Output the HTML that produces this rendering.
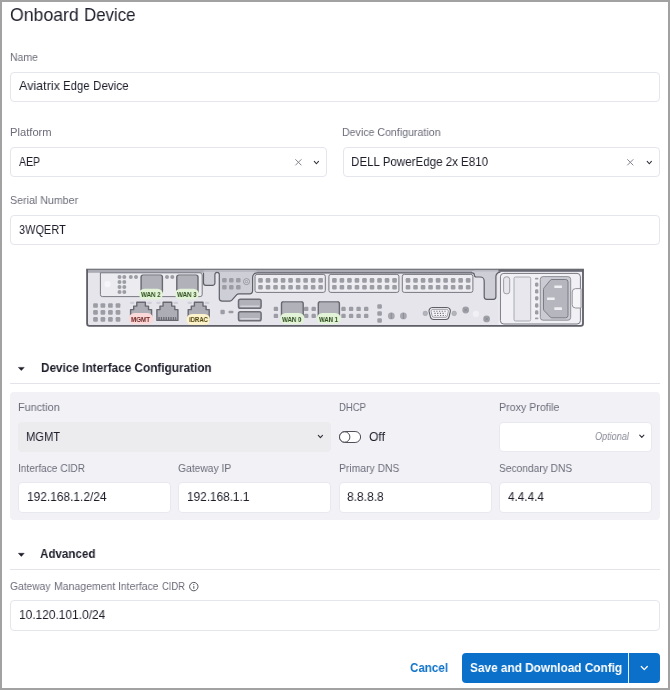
<!DOCTYPE html>
<html lang="en">
<head>
<meta charset="utf-8">
<title>Onboard Device</title>
<style>
*{box-sizing:border-box;margin:0;padding:0}
html,body{width:670px;height:690px;overflow:hidden;background:#fff}
body{font-family:"Liberation Sans",sans-serif;color:#1e1e2b;position:relative}
.frame{position:absolute;left:0;top:0;width:670px;height:690px;border:2px solid #a2a2a2}
.t{position:absolute;white-space:nowrap;transform-origin:0 0;line-height:1;will-change:transform}
.title{font-size:18.6px;color:#1e1e2b}
.lbl{font-size:11.2px;color:#6c6c7a}
.val{font-size:13.0px;color:#1e1e2b}
.hd{font-size:13.0px;font-weight:bold;color:#1e1e2b}
.opt{font-size:10.7px;font-style:italic;color:#8b8b9a}
.pg,.pr,.py{font-size:7.8px;font-weight:bold}
.pg{color:#2e4d1d}.pr{color:#6d2623}.py{color:#50450f}
.box{position:absolute;background:#fff;border:1px solid #e5e5ed;border-radius:4px}
.hr{position:absolute;height:1px;background:#e3e3e9}
.panel{position:absolute;left:10px;top:392px;width:650px;height:128px;background:#f1f1f6;border-radius:4px}
svg{position:absolute;overflow:visible}
</style>
</head>
<body>
<div class="box" style="left:10px;top:72px;width:650px;height:30px;"></div>
<div class="box" style="left:10px;top:147px;width:317px;height:30px;"></div>
<div class="box" style="left:343px;top:147px;width:317px;height:30px;"></div>
<div class="box" style="left:10px;top:215px;width:650px;height:30px;"></div>
<svg style="left:0;top:0" width="670" height="690"><path d="M295.4 159.3L301.4 165.3M301.4 159.3L295.4 165.3" fill="none" stroke="#83838f" stroke-width="1"/></svg>
<svg style="left:0;top:0" width="670" height="690"><path d="M314.3 161.45L316.4 163.75L318.5 161.45" fill="none" stroke="#30303a" stroke-width="1.1" stroke-linecap="round" stroke-linejoin="round"/></svg>
<svg style="left:0;top:0" width="670" height="690"><path d="M627.3 159.3L633.3 165.3M633.3 159.3L627.3 165.3" fill="none" stroke="#83838f" stroke-width="1"/></svg>
<svg style="left:0;top:0" width="670" height="690"><path d="M647.2 161.45L649.3 163.75L651.4 161.45" fill="none" stroke="#30303a" stroke-width="1.1" stroke-linecap="round" stroke-linejoin="round"/></svg>
<svg style="left:0;top:0" width="670" height="690" viewBox="0 0 670 690">
<path d="M86.2 268.7H583.9V323.6a3 3 0 0 1-3 3H89.2a3 3 0 0 1-3-3z" fill="#e6e5ec"/>
<rect x="87" y="269.4" width="496" height="3.4" fill="#ababb4"/>
<path d="M203.5 271.5V283a2.4 2.4 0 0 0 2.4 2.4h6.6a2.4 2.4 0 0 0 2.4-2.4V274.6a2.2 2.2 0 0 1 4.4 0V298.3a2.8 2.8 0 0 0 2.8 2.8h7.8a2.8 2.8 0 0 0 2-.9l4.9-5.5a2.8 2.8 0 0 1 2-.9h11a2.8 2.8 0 0 0 2.8-2.8V277.4a4.6 4.6 0 0 1 4.6-4.6V271.5z" fill="#ceced7"/>
<rect x="203.8" y="269.4" width="52" height="2.4" fill="#bbbbc4"/>
<path d="M203.5 272.8V283a2.4 2.4 0 0 0 2.4 2.4h6.6a2.4 2.4 0 0 0 2.4-2.4V274.6a2.2 2.2 0 0 1 4.4 0V298.3a2.8 2.8 0 0 0 2.8 2.8h7.8a2.8 2.8 0 0 0 2-.9l4.9-5.5a2.8 2.8 0 0 1 2-.9h11a2.8 2.8 0 0 0 2.8-2.8V277.4a4.6 4.6 0 0 1 4.6-4.6H472" fill="none" stroke="#5f5f68" stroke-width="1.2" stroke-linejoin="round"/>
<path d="M472 272.8a2.4 2.4 0 0 1 2.4 2.4a1.8 1.8 0 0 0 1.8 1.8h4a4 4 0 0 1 4 4V296.8a2.5 2.5 0 0 0 2.5 2.5h6.7a2.5 2.5 0 0 0 2.5-2.5V276.6a4.4 4.4 0 0 1 4.4-4.4V271H472z" fill="#ceced7"/>
<rect x="474" y="269.4" width="24.5" height="2.2" fill="#bbbbc4"/>
<path d="M472 272.8a2.4 2.4 0 0 1 2.4 2.4a1.8 1.8 0 0 0 1.8 1.8h4a4 4 0 0 1 4 4V296.8a2.5 2.5 0 0 0 2.5 2.5h6.7a2.5 2.5 0 0 0 2.5-2.5V276.6a4.4 4.4 0 0 1 4.4-4.4" fill="none" stroke="#5f5f68" stroke-width="1.2" stroke-linejoin="round" stroke-linecap="round"/>
<path d="M100.4 272.8V294.6a2 2 0 0 0 2 2H200.2a2 2 0 0 0 2-2V275a2.2 2.2 0 0 0-2.2-2.2z" fill="#ebebf0" stroke="#66666f" stroke-width="0.85"/>
<circle cx="107.5" cy="284.2" r="3.1" fill="#f6f6f9"/>
<rect x="117.5" y="275.1" width="4" height="4" rx="2" fill="#9c9ca5"/>
<rect x="122.3" y="275.1" width="4" height="4" rx="2" fill="#9c9ca5"/>
<rect x="117.5" y="280" width="4" height="4" rx="2" fill="#9c9ca5"/>
<rect x="122.3" y="280" width="4" height="4" rx="2" fill="#9c9ca5"/>
<rect x="117.5" y="285" width="4" height="4" rx="2" fill="#9c9ca5"/>
<rect x="122.3" y="285" width="4" height="4" rx="2" fill="#9c9ca5"/>
<rect x="117.5" y="289.9" width="4" height="4" rx="2" fill="#9c9ca5"/>
<rect x="122.3" y="289.9" width="4" height="4" rx="2" fill="#9c9ca5"/>
<rect x="128.8" y="275.1" width="4" height="4" rx="2" fill="#9c9ca5"/>
<rect x="134" y="275.1" width="4" height="4" rx="2" fill="#9c9ca5"/>
<rect x="165" y="275.1" width="4" height="4" rx="2" fill="#9c9ca5"/>
<rect x="170.3" y="275.1" width="4" height="4" rx="2" fill="#9c9ca5"/>
<rect x="93.15" y="303.15" width="4.7" height="4.7" rx="1.2" fill="#9c9ca5"/>
<rect x="100.55" y="303.15" width="4.7" height="4.7" rx="1.2" fill="#9c9ca5"/>
<rect x="108.05" y="303.15" width="4.7" height="4.7" rx="1.2" fill="#9c9ca5"/>
<rect x="115.65" y="303.15" width="4.7" height="4.7" rx="1.2" fill="#9c9ca5"/>
<rect x="93.15" y="310.05" width="4.7" height="4.7" rx="1.2" fill="#9c9ca5"/>
<rect x="100.55" y="310.05" width="4.7" height="4.7" rx="1.2" fill="#9c9ca5"/>
<rect x="108.05" y="310.05" width="4.7" height="4.7" rx="1.2" fill="#9c9ca5"/>
<rect x="115.65" y="310.05" width="4.7" height="4.7" rx="1.2" fill="#9c9ca5"/>
<rect x="93.15" y="317.05" width="4.7" height="4.7" rx="1.2" fill="#9c9ca5"/>
<rect x="100.55" y="317.05" width="4.7" height="4.7" rx="1.2" fill="#9c9ca5"/>
<rect x="108.05" y="317.05" width="4.7" height="4.7" rx="1.2" fill="#9c9ca5"/>
<rect x="115.65" y="317.05" width="4.7" height="4.7" rx="1.2" fill="#9c9ca5"/>
<rect x="222.15" y="278.05" width="4.5" height="4.5" rx="1.2" fill="#9c9ca5"/>
<rect x="229.05" y="278.05" width="4.5" height="4.5" rx="1.2" fill="#9c9ca5"/>
<rect x="236.05" y="278.05" width="4.5" height="4.5" rx="1.2" fill="#9c9ca5"/>
<rect x="222.15" y="284.95" width="4.5" height="4.5" rx="1.2" fill="#9c9ca5"/>
<rect x="229.05" y="284.95" width="4.5" height="4.5" rx="1.2" fill="#9c9ca5"/>
<rect x="236.05" y="284.95" width="4.5" height="4.5" rx="1.2" fill="#9c9ca5"/>
<rect x="255" y="274.4" width="70.3" height="18" rx="2" fill="#ececf1" stroke="#777780" stroke-width="1"/>
<rect x="328.9" y="274.4" width="70" height="18" rx="2" fill="#ececf1" stroke="#777780" stroke-width="1"/>
<rect x="402.3" y="274.4" width="70.6" height="18" rx="2" fill="#ececf1" stroke="#777780" stroke-width="1"/>
<rect x="258.2" y="278.1" width="4.6" height="4.6" rx="1.2" fill="#9c9ca5"/>
<rect x="265.72" y="278.1" width="4.6" height="4.6" rx="1.2" fill="#9c9ca5"/>
<rect x="273.24" y="278.1" width="4.6" height="4.6" rx="1.2" fill="#9c9ca5"/>
<rect x="280.76" y="278.1" width="4.6" height="4.6" rx="1.2" fill="#9c9ca5"/>
<rect x="288.28" y="278.1" width="4.6" height="4.6" rx="1.2" fill="#9c9ca5"/>
<rect x="295.8" y="278.1" width="4.6" height="4.6" rx="1.2" fill="#9c9ca5"/>
<rect x="303.32" y="278.1" width="4.6" height="4.6" rx="1.2" fill="#9c9ca5"/>
<rect x="310.84" y="278.1" width="4.6" height="4.6" rx="1.2" fill="#9c9ca5"/>
<rect x="318.36" y="278.1" width="4.6" height="4.6" rx="1.2" fill="#9c9ca5"/>
<rect x="258.2" y="284.9" width="4.6" height="4.6" rx="1.2" fill="#9c9ca5"/>
<rect x="265.72" y="284.9" width="4.6" height="4.6" rx="1.2" fill="#9c9ca5"/>
<rect x="273.24" y="284.9" width="4.6" height="4.6" rx="1.2" fill="#9c9ca5"/>
<rect x="280.76" y="284.9" width="4.6" height="4.6" rx="1.2" fill="#9c9ca5"/>
<rect x="288.28" y="284.9" width="4.6" height="4.6" rx="1.2" fill="#9c9ca5"/>
<rect x="295.8" y="284.9" width="4.6" height="4.6" rx="1.2" fill="#9c9ca5"/>
<rect x="303.32" y="284.9" width="4.6" height="4.6" rx="1.2" fill="#9c9ca5"/>
<rect x="310.84" y="284.9" width="4.6" height="4.6" rx="1.2" fill="#9c9ca5"/>
<rect x="318.36" y="284.9" width="4.6" height="4.6" rx="1.2" fill="#9c9ca5"/>
<rect x="332.1" y="278.1" width="4.6" height="4.6" rx="1.2" fill="#9c9ca5"/>
<rect x="339.62" y="278.1" width="4.6" height="4.6" rx="1.2" fill="#9c9ca5"/>
<rect x="347.14" y="278.1" width="4.6" height="4.6" rx="1.2" fill="#9c9ca5"/>
<rect x="354.66" y="278.1" width="4.6" height="4.6" rx="1.2" fill="#9c9ca5"/>
<rect x="362.18" y="278.1" width="4.6" height="4.6" rx="1.2" fill="#9c9ca5"/>
<rect x="369.7" y="278.1" width="4.6" height="4.6" rx="1.2" fill="#9c9ca5"/>
<rect x="377.22" y="278.1" width="4.6" height="4.6" rx="1.2" fill="#9c9ca5"/>
<rect x="384.74" y="278.1" width="4.6" height="4.6" rx="1.2" fill="#9c9ca5"/>
<rect x="392.26" y="278.1" width="4.6" height="4.6" rx="1.2" fill="#9c9ca5"/>
<rect x="332.1" y="284.9" width="4.6" height="4.6" rx="1.2" fill="#9c9ca5"/>
<rect x="339.62" y="284.9" width="4.6" height="4.6" rx="1.2" fill="#9c9ca5"/>
<rect x="347.14" y="284.9" width="4.6" height="4.6" rx="1.2" fill="#9c9ca5"/>
<rect x="354.66" y="284.9" width="4.6" height="4.6" rx="1.2" fill="#9c9ca5"/>
<rect x="362.18" y="284.9" width="4.6" height="4.6" rx="1.2" fill="#9c9ca5"/>
<rect x="369.7" y="284.9" width="4.6" height="4.6" rx="1.2" fill="#9c9ca5"/>
<rect x="377.22" y="284.9" width="4.6" height="4.6" rx="1.2" fill="#9c9ca5"/>
<rect x="384.74" y="284.9" width="4.6" height="4.6" rx="1.2" fill="#9c9ca5"/>
<rect x="392.26" y="284.9" width="4.6" height="4.6" rx="1.2" fill="#9c9ca5"/>
<rect x="405.7" y="278.1" width="4.6" height="4.6" rx="1.2" fill="#9c9ca5"/>
<rect x="413.22" y="278.1" width="4.6" height="4.6" rx="1.2" fill="#9c9ca5"/>
<rect x="420.74" y="278.1" width="4.6" height="4.6" rx="1.2" fill="#9c9ca5"/>
<rect x="428.26" y="278.1" width="4.6" height="4.6" rx="1.2" fill="#9c9ca5"/>
<rect x="435.78" y="278.1" width="4.6" height="4.6" rx="1.2" fill="#9c9ca5"/>
<rect x="443.3" y="278.1" width="4.6" height="4.6" rx="1.2" fill="#9c9ca5"/>
<rect x="450.82" y="278.1" width="4.6" height="4.6" rx="1.2" fill="#9c9ca5"/>
<rect x="458.34" y="278.1" width="4.6" height="4.6" rx="1.2" fill="#9c9ca5"/>
<rect x="465.86" y="278.1" width="4.6" height="4.6" rx="1.2" fill="#9c9ca5"/>
<rect x="405.7" y="284.9" width="4.6" height="4.6" rx="1.2" fill="#9c9ca5"/>
<rect x="413.22" y="284.9" width="4.6" height="4.6" rx="1.2" fill="#9c9ca5"/>
<rect x="420.74" y="284.9" width="4.6" height="4.6" rx="1.2" fill="#9c9ca5"/>
<rect x="428.26" y="284.9" width="4.6" height="4.6" rx="1.2" fill="#9c9ca5"/>
<rect x="435.78" y="284.9" width="4.6" height="4.6" rx="1.2" fill="#9c9ca5"/>
<rect x="443.3" y="284.9" width="4.6" height="4.6" rx="1.2" fill="#9c9ca5"/>
<rect x="450.82" y="284.9" width="4.6" height="4.6" rx="1.2" fill="#9c9ca5"/>
<rect x="458.34" y="284.9" width="4.6" height="4.6" rx="1.2" fill="#9c9ca5"/>
<rect x="465.86" y="284.9" width="4.6" height="4.6" rx="1.2" fill="#9c9ca5"/>
<rect x="273.7" y="306.7" width="4.4" height="4.4" rx="1.2" fill="#9c9ca5"/>
<rect x="273.7" y="313.7" width="4.4" height="4.4" rx="1.2" fill="#9c9ca5"/>
<rect x="304" y="306.7" width="4.4" height="4.4" rx="1.2" fill="#9c9ca5"/>
<rect x="311.5" y="306.7" width="4.4" height="4.4" rx="1.2" fill="#9c9ca5"/>
<rect x="304" y="313.7" width="4.4" height="4.4" rx="1.2" fill="#9c9ca5"/>
<rect x="311.5" y="313.7" width="4.4" height="4.4" rx="1.2" fill="#9c9ca5"/>
<rect x="341.3" y="306.7" width="4.4" height="4.4" rx="1.2" fill="#9c9ca5"/>
<rect x="348.9" y="306.7" width="4.4" height="4.4" rx="1.2" fill="#9c9ca5"/>
<rect x="356.4" y="306.7" width="4.4" height="4.4" rx="1.2" fill="#9c9ca5"/>
<rect x="364" y="306.7" width="4.4" height="4.4" rx="1.2" fill="#9c9ca5"/>
<rect x="341.3" y="313.7" width="4.4" height="4.4" rx="1.2" fill="#9c9ca5"/>
<rect x="348.9" y="313.7" width="4.4" height="4.4" rx="1.2" fill="#9c9ca5"/>
<rect x="356.4" y="313.7" width="4.4" height="4.4" rx="1.2" fill="#9c9ca5"/>
<rect x="364" y="313.7" width="4.4" height="4.4" rx="1.2" fill="#9c9ca5"/>
<rect x="377.3" y="304.2" width="4.6" height="4.6" rx="1.2" fill="#9c9ca5"/>
<rect x="377.3" y="311.2" width="4.6" height="4.6" rx="1.2" fill="#9c9ca5"/>
<rect x="377.3" y="318.2" width="4.6" height="4.6" rx="1.2" fill="#9c9ca5"/>
<rect x="220.4" y="309.8" width="4.4" height="4.4" rx="1.2" fill="#9c9ca5"/>
<rect x="228.5" y="310.8" width="5" height="2.4" rx="1" fill="#9c9ca5"/>
<circle cx="246.5" cy="281.6" r="3" fill="#d8d8df" stroke="#8e8e97" stroke-width="0.9"/><circle cx="246.5" cy="281.6" r="1.2" fill="none" stroke="#8e8e97" stroke-width="0.8"/>
<circle cx="391.3" cy="315.9" r="3.4" fill="#a7a7b0"/><path d="M391.3 312.8v6.2" stroke="#8a8a93" stroke-width="0.9"/>
<circle cx="403.4" cy="315.9" r="3.4" fill="#a7a7b0"/><path d="M403.4 312.8v6.2" stroke="#8a8a93" stroke-width="0.9"/>
<circle cx="465.7" cy="310" r="3.4" fill="#a0a0a9"/>
<path d="M464.2 308.5l3 3M467.2 308.5l-3 3" stroke="#85858e" stroke-width="0.8" fill="none"/>
<circle cx="486.6" cy="318.9" r="3.4" fill="#a0a0a9"/>
<path d="M485.1 317.4l3 3M488.1 317.4l-3 3" stroke="#85858e" stroke-width="0.8" fill="none"/>
<circle cx="475.9" cy="313.9" r="3.1" fill="#f1f1f5"/>
<rect x="141.1" y="275.1" width="21.3" height="18.2" rx="2" fill="#b1b1ba" stroke="#686871" stroke-width="1.4"/>
<path d="M142.8 275.3H160.7" stroke="#9d9da6" stroke-width="1.2"/>
<rect x="176.8" y="275.1" width="21.2" height="18.2" rx="2" fill="#b1b1ba" stroke="#686871" stroke-width="1.4"/>
<path d="M178.5 275.3H196.3" stroke="#9d9da6" stroke-width="1.2"/>
<rect x="281.5" y="301.8" width="21.7" height="16.5" rx="2" fill="#b1b1ba" stroke="#686871" stroke-width="1.4"/>
<path d="M283.2 302H301.5" stroke="#9d9da6" stroke-width="1.2"/>
<rect x="318.3" y="301.8" width="21.1" height="16.5" rx="2" fill="#b1b1ba" stroke="#686871" stroke-width="1.4"/>
<path d="M320 302H337.7" stroke="#9d9da6" stroke-width="1.2"/>
<path d="M130.6 320.4V309.6h3.1v-3.5h3.1v-3.8h8.6v3.8h3.1v3.5h3.1V320.4z" fill="#adadb6" stroke="#686871" stroke-width="1.4" stroke-linejoin="round"/>
<rect x="129.9" y="301.7" width="4.6" height="2.2" rx="1.1" fill="#cfcfd7"/><rect x="147.1" y="301.7" width="4.8" height="2.2" rx="1.1" fill="#cfcfd7"/>
<path d="M156.9 320.4V309.6h3.1v-3.5h3.1v-3.8h8.6v3.8h3.1v3.5h3.1V320.4z" fill="#adadb6" stroke="#686871" stroke-width="1.4" stroke-linejoin="round"/>
<rect x="156.2" y="301.7" width="4.6" height="2.2" rx="1.1" fill="#cfcfd7"/><rect x="173.4" y="301.7" width="4.8" height="2.2" rx="1.1" fill="#cfcfd7"/>
<path d="M158.4 318.6H176.2" stroke="#686871" stroke-width="3" stroke-dasharray="1.3 1.1"/>
<path d="M188.2 320.4V309.6h3.1v-3.5h3.1v-3.8h8.6v3.8h3.1v3.5h3.1V320.4z" fill="#adadb6" stroke="#686871" stroke-width="1.4" stroke-linejoin="round"/>
<rect x="187.5" y="301.7" width="4.6" height="2.2" rx="1.1" fill="#cfcfd7"/><rect x="204.7" y="301.7" width="4.8" height="2.2" rx="1.1" fill="#cfcfd7"/>
<rect x="238.5" y="299.25" width="22.6" height="9" rx="1.8" fill="#b1b1ba" stroke="#6e6e77" stroke-width="1.5"/>
<path d="M240.4 306.2H259.2" stroke="#e0e0e6" stroke-width="1.1"/>
<rect x="238.5" y="311.85" width="22.6" height="9" rx="1.8" fill="#b1b1ba" stroke="#6e6e77" stroke-width="1.5"/>
<path d="M240.4 318.8H259.2" stroke="#e0e0e6" stroke-width="1.1"/>
<path d="M432.4 307.5h14.6a3.4 3.4 0 0 1 3.3 4.2l-1.3 5.2a3.4 3.4 0 0 1-3.3 2.6h-12a3.4 3.4 0 0 1-3.3-2.6l-1.3-5.2a3.4 3.4 0 0 1 3.3-4.2z" fill="#f3f3f6" stroke="#5f5f68" stroke-width="1.1"/>
<path d="M433 309.3h13.4a1.9 1.9 0 0 1 1.9 2.4l-1 4.1a1.9 1.9 0 0 1-1.9 1.5h-11.4a1.9 1.9 0 0 1-1.9-1.5l-1-4.1a1.9 1.9 0 0 1 1.9-2.4z" fill="#f3f3f6" stroke="#777780" stroke-width="0.7"/>
<path d="M433.6 311.3H446M434.4 313.4H445.4M434.6 315.5H446" stroke="#74747d" stroke-width="1.1" stroke-dasharray="1.2 1.5"/>
<circle cx="425.3" cy="313.4" r="2.3" fill="#b4b4bc" stroke="#9a9aa3" stroke-width="0.5"/>
<circle cx="454.2" cy="313.4" r="2.3" fill="#b4b4bc" stroke="#9a9aa3" stroke-width="0.5"/>
<path d="M498.6 276a4.2 4.2 0 0 1 4.2-4.2H582V325H498.6z" fill="#f0f0f5"/>
<rect x="498.5" y="269.4" width="84.5" height="2.3" fill="#696972"/>
<rect x="500.4" y="273.4" width="80" height="50.6" rx="3.4" fill="#f1f1f5" stroke="#777780" stroke-width="1"/>
<rect x="503.6" y="276.8" width="6.1" height="17" rx="2.6" fill="#e6e6ec" stroke="#8a8a93" stroke-width="0.8"/>
<rect x="514" y="277" width="16.7" height="44" rx="1.4" fill="#e7e7ed" stroke="#9a9aa3" stroke-width="0.8"/>
<rect x="535" y="282.45" width="3.4" height="4.3" rx="1.4" fill="#9c9ca5"/>
<rect x="535" y="289.25" width="3.4" height="4.3" rx="1.4" fill="#9c9ca5"/>
<rect x="535" y="296.15" width="3.4" height="4.3" rx="1.4" fill="#9c9ca5"/>
<rect x="535" y="303.35" width="3.4" height="4.3" rx="1.4" fill="#9c9ca5"/>
<rect x="535" y="310.25" width="3.4" height="4.3" rx="1.4" fill="#9c9ca5"/>
<rect x="535" y="277.75" width="3.4" height="1.7" rx="0.6" fill="#9c9ca5"/>
<rect x="535" y="317.55" width="3.4" height="1.7" rx="0.6" fill="#9c9ca5"/>
<rect x="540.3" y="276.6" width="30.4" height="43.6" rx="2.8" fill="#cbcbd3" stroke="#888891" stroke-width="0.9"/>
<path d="M552 279.5h13.6a2.4 2.4 0 0 1 2.4 2.4v33.5a2.4 2.4 0 0 1-2.4 2.4H552a2.4 2.4 0 0 1-1.7-.7l-6.1-6.4a2.4 2.4 0 0 1-.7-1.7V289.4a2.4 2.4 0 0 1 .7-1.7l6.1-7.5a2.4 2.4 0 0 1 1.7-.7z" fill="#b6b6bf" stroke="#74747d" stroke-width="0.9"/>
<rect x="554.3" y="285.4" width="7.7" height="2.6" rx="0.4" fill="#eeeef3"/>
<rect x="547" y="297.4" width="7.7" height="2.6" rx="0.4" fill="#eeeef3"/>
<rect x="554.3" y="307.3" width="7.7" height="2.6" rx="0.4" fill="#eeeef3"/>
<path d="M581 288.6h-5.4a3.4 3.4 0 0 0-3.4 3.4v12.6a3.4 3.4 0 0 0 3.4 3.4H581z" fill="#f6f6f9" stroke="#888891" stroke-width="0.9"/>
<path d="M87.1 269.2V323.5a2.4 2.4 0 0 0 2.4 2.4H580.6a2.4 2.4 0 0 0 2.4-2.4V269.2" fill="none" stroke="#5f5f68" stroke-width="1.8"/>
<path d="M86.2 269.2H583.9" fill="none" stroke="#5f5f68" stroke-width="1.1"/>
<rect x="138.9" y="288.8" width="24" height="10.7" rx="5.35" fill="#e2f3d7"/>
<rect x="175" y="288.8" width="23.9" height="10.7" rx="5.35" fill="#e2f3d7"/>
<rect x="280.1" y="313" width="24.4" height="11" rx="5.5" fill="#e2f3d7"/>
<rect x="316.9" y="313" width="23.9" height="11" rx="5.5" fill="#e2f3d7"/>
<rect x="128.8" y="313" width="24.4" height="11.3" rx="5.65" fill="#fbd9d9"/>
<rect x="186.5" y="314" width="23.5" height="11" rx="5.5" fill="#fcf2cb"/>
</svg>
<svg style="left:0;top:0" width="670" height="690"><path d="M18.4 367.4h5.8l-2.9 3.1z" fill="#1e1e2b" stroke="#1e1e2b" stroke-width="0.5" stroke-linejoin="round"/></svg>
<div class="hr" style="left:10px;top:383px;width:650px"></div>
<div class="panel"></div>
<div class="box" style="left:18px;top:422px;width:313px;height:30px;background:#ececef;border-color:#ececef"></div>
<svg style="left:0;top:0" width="670" height="690"><path d="M318.3 435.35L320.4 437.65L322.5 435.35" fill="none" stroke="#30303a" stroke-width="1.1" stroke-linecap="round" stroke-linejoin="round"/></svg>
<svg style="left:0;top:0" width="670" height="690"><rect x="339.5" y="431.5" width="21.1" height="11" rx="5.5" fill="#fff" stroke="#505059" stroke-width="1"/><circle cx="344.7" cy="437" r="5.2" fill="#fff" stroke="#505059" stroke-width="1"/></svg>
<div class="box" style="left:499px;top:422px;width:153px;height:30px;border-color:#e8e8f0"></div>
<svg style="left:0;top:0" width="670" height="690"><path d="M639.7 435.15L641.8 437.45L643.9 435.15" fill="none" stroke="#30303a" stroke-width="1.1" stroke-linecap="round" stroke-linejoin="round"/></svg>
<div class="box" style="left:18px;top:482px;width:153px;height:31px;border-color:#e8e8f0"></div>
<div class="box" style="left:178px;top:482px;width:153px;height:31px;border-color:#e8e8f0"></div>
<div class="box" style="left:339px;top:482px;width:153px;height:31px;border-color:#e8e8f0"></div>
<div class="box" style="left:499px;top:482px;width:153px;height:31px;border-color:#e8e8f0"></div>
<svg style="left:0;top:0" width="670" height="690"><path d="M18.4 553.3h5.8l-2.9 3.1z" fill="#1e1e2b" stroke="#1e1e2b" stroke-width="0.5" stroke-linejoin="round"/></svg>
<div class="hr" style="left:10px;top:569px;width:650px"></div>
<svg style="left:0;top:0" width="670" height="690"><circle cx="193.8" cy="586.6" r="4.2" fill="none" stroke="#4d4d5a" stroke-width="0.95"/><path d="M193.8 586.1v2.7" stroke="#4d4d5a" stroke-width="0.95" fill="none"/><circle cx="193.8" cy="584.6" r="0.6" fill="#4d4d5a"/></svg>
<div class="box" style="left:10px;top:600px;width:650px;height:31px;"></div>
<div style="position:absolute;left:462px;top:653px;width:198px;height:29.5px;background:#0b70c9;border-radius:4px"></div>
<div style="position:absolute;left:628px;top:653px;width:1px;height:29.5px;background:#e8f2fb"></div>
<svg style="left:0;top:0" width="670" height="690"><path d="M641.3 666.55L644.3 669.65L647.3 666.55" fill="none" stroke="#fff" stroke-width="1.3" stroke-linecap="round" stroke-linejoin="round"/></svg>
<div class="t title" style="left:10.437px;top:6px;transform:scaleX(0.95)">Onboard</div>
<div class="t title" style="left:84.393px;top:6px;transform:scaleX(0.905)">Device</div>
<div class="t lbl" style="left:10.061px;top:52px;transform:scaleX(0.939)">Name</div>
<div class="t val" style="left:19.15px;top:79px;transform:scaleX(0.963)">Aviatrix</div>
<div class="t val" style="left:63.377px;top:79px;transform:scaleX(0.873)">Edge</div>
<div class="t val" style="left:93.053px;top:79px;transform:scaleX(0.897)">Device</div>
<div class="t lbl" style="left:10.006px;top:127px;transform:scaleX(0.994)">Platform</div>
<div class="t val" style="left:19.35px;top:155px;transform:scaleX(0.812)">AEP</div>
<div class="t lbl" style="left:342.202px;top:127px;transform:scaleX(0.948)">Device Configuration</div>
<div class="t val" style="left:350.861px;top:155px;transform:scaleX(0.889)">DELL PowerEdge 2x E810</div>
<div class="t lbl" style="left:9.974px;top:195px;transform:scaleX(0.953)">Serial Number</div>
<div class="t val" style="left:18.928px;top:223px;transform:scaleX(0.844)">3WQERT</div>
<div class="t hd" style="left:41.071px;top:361px;transform:scaleX(0.905)">Device Interface Configuration</div>
<div class="t lbl" style="left:17.978px;top:402px;transform:scaleX(0.972)">Function</div>
<div class="t val" style="left:26.19px;top:430px;transform:scaleX(0.86)">MGMT</div>
<div class="t lbl" style="left:338.9px;top:402px;transform:scaleX(0.85)">DHCP</div>
<div class="t val" style="left:368.881px;top:430px;transform:scaleX(0.937)">Off</div>
<div class="t lbl" style="left:498.798px;top:402px;transform:scaleX(0.952)">Proxy Profile</div>
<div class="t opt" style="left:594.925px;top:431px;transform:scaleX(0.851)">Optional</div>
<div class="t lbl" style="left:18.045px;top:463px;transform:scaleX(0.905)">Interface CIDR</div>
<div class="t val" style="left:26.733px;top:490px;transform:scaleX(0.917)">192.168.1.2/24</div>
<div class="t lbl" style="left:177.989px;top:463px;transform:scaleX(0.922)">Gateway IP</div>
<div class="t val" style="left:187.241px;top:490px;transform:scaleX(0.909)">192.168.1.1</div>
<div class="t lbl" style="left:338.825px;top:463px;transform:scaleX(0.925)">Primary DNS</div>
<div class="t val" style="left:347.188px;top:490px;transform:scaleX(0.924)">8.8.8.8</div>
<div class="t lbl" style="left:498.994px;top:463px;transform:scaleX(0.912)">Secondary DNS</div>
<div class="t val" style="left:507.924px;top:490px;transform:scaleX(0.904)">4.4.4.4</div>
<div class="t hd" style="left:40.427px;top:547px;transform:scaleX(0.892)">Advanced</div>
<div class="t lbl" style="left:10.391px;top:581px;transform:scaleX(0.917)">Gateway</div>
<div class="t lbl" style="left:53.911px;top:581px;transform:scaleX(0.939)">Management</div>
<div class="t lbl" style="left:117.919px;top:581px;transform:scaleX(0.931)">Interface</div>
<div class="t lbl" style="left:162.131px;top:581px;transform:scaleX(0.838)">CIDR</div>
<div class="t val" style="left:19.032px;top:608px;transform:scaleX(0.918)">10.120.101.0/24</div>
<div class="t pg" style="left:141.15px;top:291px;transform:scaleX(0.8)">WAN 2</div>
<div class="t pg" style="left:177.15px;top:291px;transform:scaleX(0.8)">WAN 3</div>
<div class="t pg" style="left:282.45px;top:316px;transform:scaleX(0.788)">WAN 0</div>
<div class="t pg" style="left:319.45px;top:316px;transform:scaleX(0.771)">WAN 1</div>
<div class="t pr" style="left:130.75px;top:316px;transform:scaleX(0.8)">MGMT</div>
<div class="t py" style="left:188.667px;top:316px;transform:scaleX(0.767)">iDRAC</div>
<div class="t hd" style="left:409.504px;top:661px;transform:scaleX(0.892);color:#0e72c9">Cancel</div>
<div class="t hd" style="left:469.696px;top:661px;transform:scaleX(0.908);color:#fff">Save and Download Config</div>
<div class="frame"></div>
</body>
</html>
